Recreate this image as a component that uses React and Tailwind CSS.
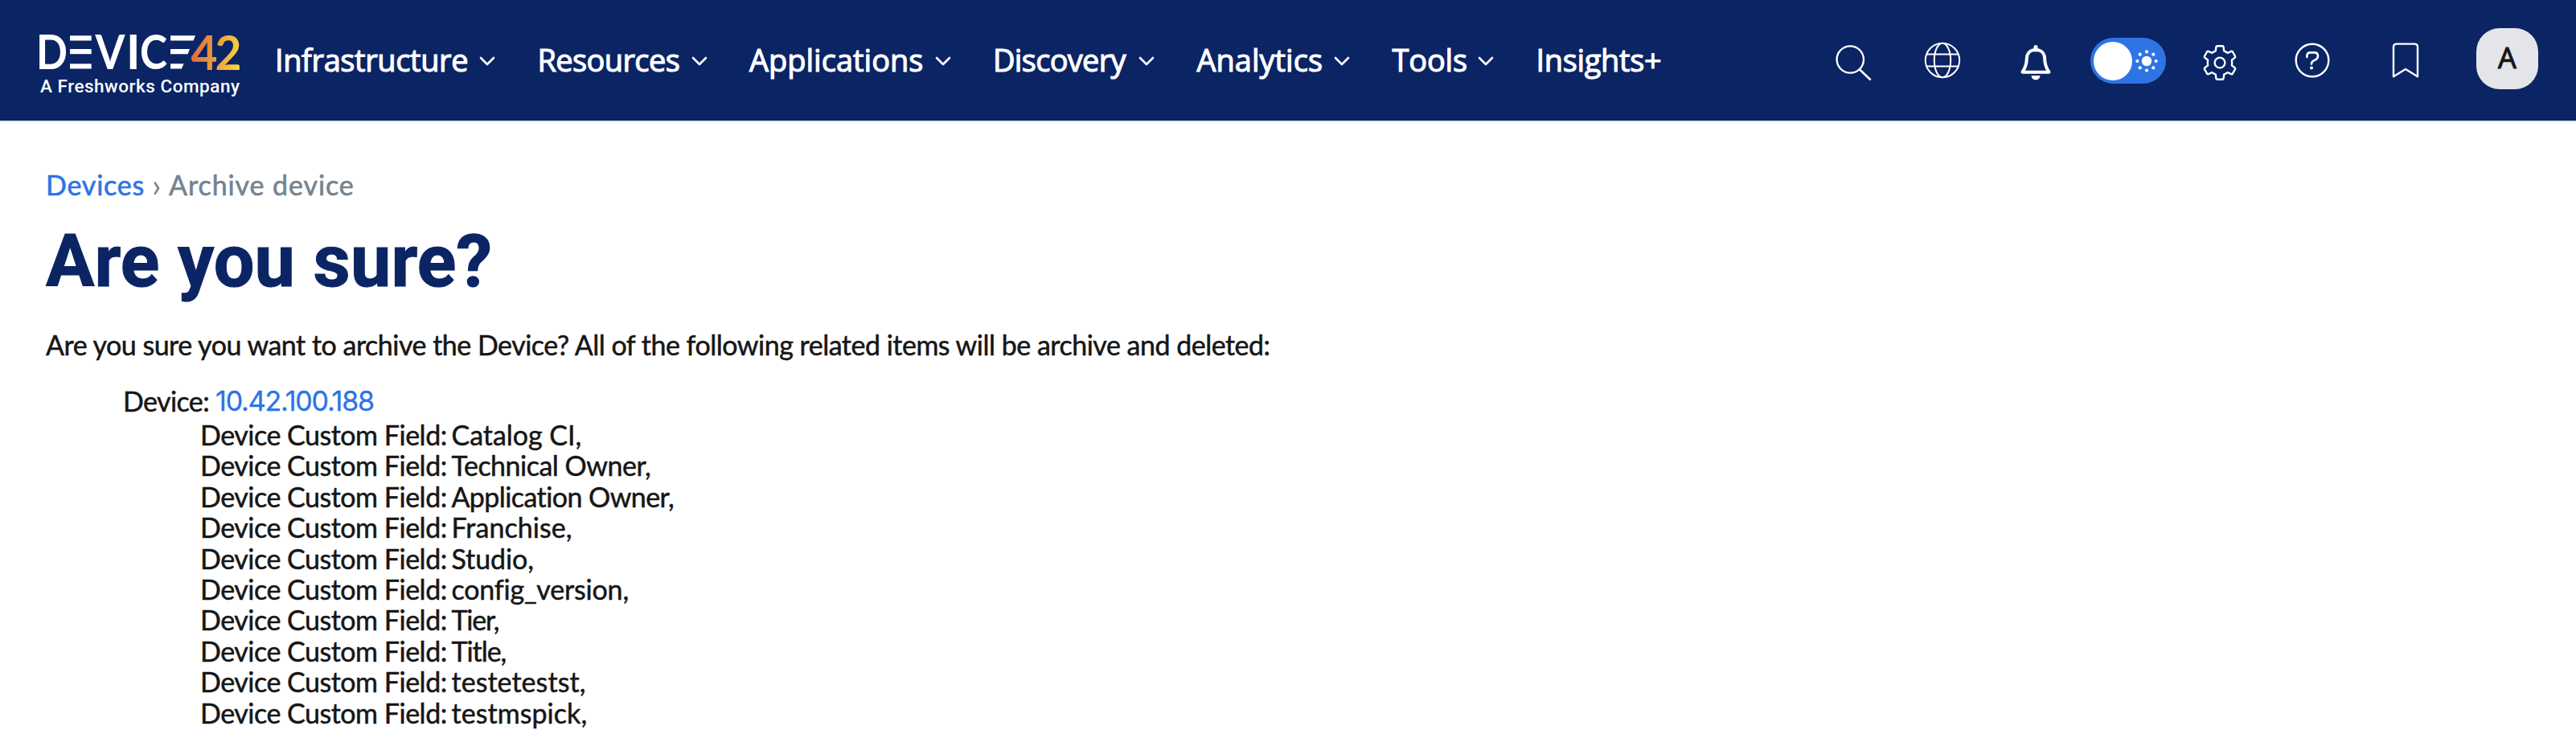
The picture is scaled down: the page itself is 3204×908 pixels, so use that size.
import React from "react";

const navItems = [
  { label: "Infrastructure", box: "w-[274px]", tracking: "tracking-[-0.4px]" },
  { label: "Resources", box: "w-[211px]", tracking: "tracking-[-0.62px]" },
  { label: "Applications", box: "w-[250.5px]", tracking: "tracking-[0px]" },
  { label: "Discovery", box: "w-[201px]", tracking: "tracking-[-0.7px]" },
  { label: "Analytics", box: "w-[190.5px]", tracking: "tracking-[0px]" },
  { label: "Tools", box: "w-[126.5px]", tracking: "tracking-[-0.2px]" },
];

const fields = [
  { name: "Catalog CI,", tracking: "tracking-[-0.04px]" },
  { name: "Technical Owner,", tracking: "tracking-[-0.5px]" },
  { name: "Application Owner,", tracking: "tracking-[-0.58px]" },
  { name: "Franchise,", tracking: "tracking-[0.05px]" },
  { name: "Studio,", tracking: "tracking-[-0.1px]" },
  { name: "config_version,", tracking: "tracking-[-0.2px]" },
  { name: "Tier,", tracking: "tracking-[-1.2px]" },
  { name: "Title,", tracking: "tracking-[-1.05px]" },
  { name: "testetestst,", tracking: "tracking-[0.05px]" },
  { name: "testmspick,", tracking: "tracking-[0.05px]" },
];

function Logo() {
  return (
    <svg className="h-[90px] w-[256px] overflow-visible" viewBox="46 38 256 90" fill="#ffffff">
      <defs>
        <linearGradient id="amber" gradientUnits="userSpaceOnUse" x1="240" y1="70" x2="298" y2="80">
          <stop offset="0" stopColor="#e2703f" />
          <stop offset="0.5" stopColor="#eda03c" />
          <stop offset="1" stopColor="#f9d73f" />
        </linearGradient>
      </defs>
      <g fontFamily="Lato, sans-serif" fontSize="59" fontWeight="700">
        <text x="45" y="86" textLength="39" lengthAdjust="spacingAndGlyphs">D</text>
        <text x="118.5" y="86" textLength="37" lengthAdjust="spacingAndGlyphs">V</text>
        <text x="157" y="86">I</text>
        <text x="174" y="86" textLength="34" lengthAdjust="spacingAndGlyphs">C</text>
        <text x="237.5" y="86.5" fill="url(#amber)" textLength="33" lengthAdjust="spacingAndGlyphs">4</text>
        <text x="267.5" y="86.5" fill="url(#amber)" textLength="33" lengthAdjust="spacingAndGlyphs">2</text>
      </g>
      <rect x="87" y="44.3" width="26.7" height="6.2" />
      <rect x="87" y="61" width="26.7" height="6.2" />
      <rect x="87" y="79.3" width="26.7" height="6.2" />
      <path d="M212 44.3H243L240.5 50.5H212ZM212 61H236L233.5 67.2H212ZM212 79.3H228.5L226 85.5H212Z" />
      <text x="50" y="115" fontFamily="Roboto, sans-serif" fontSize="22.5" fontWeight="500" textLength="248">
        A Freshworks Company
      </text>
    </svg>
  );
}

function Chevron() {
  return (
    <svg className="h-[14px] w-[20px]" viewBox="0 0 20 14" fill="none" stroke="#fff" strokeWidth="2.6" strokeLinecap="round" strokeLinejoin="round">
      <path d="M2 3L10 11L18 3" />
    </svg>
  );
}

function SearchIcon() {
  return (
    <svg className="h-[48px] w-[48px]" viewBox="0 0 48 48" fill="none" stroke="#fff" strokeWidth="2.3" strokeLinecap="round">
      <circle cx="21.3" cy="22" r="16.7" />
      <path d="M33.3 34.7L46 46.7" strokeWidth="2.6" />
    </svg>
  );
}

function GlobeIcon() {
  return (
    <svg className="h-[46px] w-[46px]" viewBox="0 0 46 46" fill="none" stroke="#fff" strokeWidth="2">
      <circle cx="23" cy="23" r="21.2" />
      <ellipse cx="23" cy="23" rx="10.2" ry="21.2" />
      <path d="M3.5 15.5H42.5M3.5 30.5H42.5" />
    </svg>
  );
}

function BellIcon() {
  return (
    <svg className="h-[46px] w-[40px]" viewBox="0 0 40 46" fill="none" stroke="#fff" strokeWidth="4" strokeLinejoin="round">
      <path d="M20 8C12.5 8 8.8 13 8.8 19C8.8 27 6.6 31 3.5 35.7H36.5C33.4 31 31.2 27 31.2 19C31.2 13 27.5 8 20 8Z" />
      <path d="M20 4.5V8" strokeWidth="5" strokeLinecap="round" />
      <path d="M14.6 40H25.4C25.4 43.3 23 45.3 20 45.3S14.6 43.3 14.6 40Z" fill="#fff" stroke="none" />
    </svg>
  );
}

function SunIcon() {
  return (
    <svg className="h-[28px] w-[28px]" viewBox="-14 -14 28 28" fill="#fff">
      <circle r="6.2" />
      <circle cx="0" cy="-11.6" r="2.1" />
      <circle cx="0" cy="11.6" r="2.1" />
      <circle cx="-11.6" cy="0" r="2.1" />
      <circle cx="11.6" cy="0" r="2.1" />
      <circle cx="-8.3" cy="-8.3" r="2.1" />
      <circle cx="8.3" cy="-8.3" r="2.1" />
      <circle cx="-8.3" cy="8.3" r="2.1" />
      <circle cx="8.3" cy="8.3" r="2.1" />
    </svg>
  );
}

function GearIcon() {
  return (
    <svg className="h-[48px] w-[44px]" viewBox="-22 -24 44 48" fill="none" stroke="#fff" strokeWidth="2.4" strokeLinejoin="round">
      <path d="M-3.2 -20.8H3.2Q4.4 -20.8 4.6 -19.6L5.2 -14.6Q7.5 -13.8 9.6 -12.1L14.2 -14.1Q15.3 -14.5 16 -13.5L19 -8.2Q19.6 -7.2 18.7 -6.4L14.9 -3.3Q15.5 0 14.9 3.3L18.7 6.4Q19.6 7.2 19 8.2L16 13.5Q15.3 14.5 14.2 14.1L9.6 12.1Q7.5 13.8 5.2 14.6L4.6 19.6Q4.4 20.8 3.2 20.8H-3.2Q-4.4 20.8 -4.6 19.6L-5.2 14.6Q-7.5 13.8 -9.6 12.1L-14.2 14.1Q-15.3 14.5 -16 13.5L-19 8.2Q-19.6 7.2 -18.7 6.4L-14.9 3.3Q-15.5 0 -14.9 -3.3L-18.7 -6.4Q-19.6 -7.2 -19 -8.2L-16 -13.5Q-15.3 -14.5 -14.2 -14.1L-9.6 -12.1Q-7.5 -13.8 -5.2 -14.6L-4.6 -19.6Q-4.4 -20.8 -3.2 -20.8Z" />
      <circle r="6.4" />
    </svg>
  );
}

function HelpIcon() {
  return (
    <svg className="h-[46px] w-[46px]" viewBox="0 0 46 46" fill="none" stroke="#fff" strokeWidth="2.4" strokeLinecap="round">
      <circle cx="23" cy="23" r="20.3" />
      <path d="M16.4 19V17.2Q16.4 13.4 20.4 13.4H25.6Q30 13.4 30 17.6Q30 20.8 27 22.3L24.8 23.4Q22 24.8 22 27.6" strokeWidth="2.6" />
      <circle cx="22" cy="32.4" r="2" fill="#fff" stroke="none" />
    </svg>
  );
}

function BookmarkIcon() {
  return (
    <svg className="h-[46px] w-[36px]" viewBox="0 0 36 46" fill="none" stroke="#fff" strokeWidth="2.4" strokeLinejoin="round">
      <path d="M3 43.2V6.5Q3 2.6 7 2.6H29Q33 2.6 33 6.5V43.2L18 34Z" />
    </svg>
  );
}

export default function App() {
  return (
    <div className="flex h-[908px] w-full flex-col overflow-hidden bg-white font-['Lato',sans-serif] text-[#161616]">
      <header className="flex h-[152px] shrink-0 items-start border-b-2 border-[#e2e3e8] bg-[#0b2464] text-white">
        <div className="mt-[38px] ml-[46px]">
          <Logo />
        </div>
        <nav className="mt-[46px] ml-[40px] flex h-[56px] items-center gap-[52.5px] font-['Open_Sans',sans-serif] text-[38px] leading-[56px] [-webkit-text-stroke:1.1px_#fff]">
          {navItems.map((item) => (
            <div key={item.label} className={`flex items-center justify-between ${item.box}`}>
              <span className={item.tracking}>{item.label}</span>
              <span className="mt-[4px]">
                <Chevron />
              </span>
            </div>
          ))}
          <span className="tracking-[-0.35px]">Insights+</span>
        </nav>
        <div className="mr-[47px] ml-auto flex items-start">
          <div className="mt-[52px] mr-[65.3px]"><SearchIcon /></div>
          <div className="mt-[51.5px] mr-[72.5px]"><GlobeIcon /></div>
          <div className="mt-[54px] mr-[48px]"><BellIcon /></div>
          <div className="mt-[47px] mr-[45.5px] flex h-[57px] w-[94px] items-center justify-between rounded-full bg-[#2f74e4] pr-[10px] pl-[4.5px]">
            <span className="h-[48px] w-[48px] rounded-full bg-white" />
            <SunIcon />
          </div>
          <div className="mt-[54px] mr-[70px]"><GearIcon /></div>
          <div className="mt-[51.5px] mr-[75px]"><HelpIcon /></div>
          <div className="mt-[51.5px] mr-[70px]"><BookmarkIcon /></div>
          <div className="mt-[35px] flex h-[76px] w-[77px] items-center justify-center rounded-[29px] bg-[#e4e5e9] font-['Open_Sans',sans-serif] text-[36px] leading-[50px] text-[#161616] [-webkit-text-stroke:1.1px_#161616]">
            <span className="mb-[3px]">A</span>
          </div>
        </div>
      </header>
      <main className="flex flex-col pl-[57px]">
        <div className="mt-[58px] flex h-[40px] items-center text-[34px] leading-[40px] text-[#74838f]">
          <span className="tracking-[0.8px] text-[#2c73e6] [-webkit-text-stroke:0.6px_#2c73e6]">Devices</span>
          <span className="w-[30px] pl-[9px] text-[40px]">›</span>
          <span className="tracking-[0.9px] [-webkit-text-stroke:0.6px_#74838f]">Archive device</span>
        </div>
        <h1 className="mt-[21px] self-start font-['Roboto',sans-serif] text-[90px] leading-[110px] font-bold tracking-[0.1px] text-[#0b2464] [-webkit-text-stroke:1px_#0b2464]">
          Are you sure?
        </h1>
        <p className="mt-[28px] self-start text-[34px] leading-[40px] tracking-[-0.5px] [-webkit-text-stroke:0.5px_#161616]">
          Are you sure you want to archive the Device? All of the following related items will be archive and deleted:
        </p>
        <div className="mt-[30px] flex flex-col pl-[96px] text-[34px] [-webkit-text-stroke:0.5px_#161616]">
          <div className="flex h-[40px] items-center gap-[8px] leading-[40px] tracking-[-0.6px]">
            <span>Device:</span>
            <a className="font-['Inter',sans-serif] tracking-[-1.2px] text-[#2c73e6] [-webkit-text-stroke:0.3px_#2c73e6]">10.42.100.188</a>
          </div>
          <ul className="mt-[3px] flex flex-col pl-[96px]">
            {fields.map((field) => (
              <li key={field.name} className="flex h-[38.4px] items-center leading-[38.4px] whitespace-nowrap">
                <span className="w-[312.5px] tracking-[-0.49px]">Device Custom Field:</span>
                <span className={field.tracking}>{field.name}</span>
              </li>
            ))}
          </ul>
        </div>
      </main>
    </div>
  );
}
